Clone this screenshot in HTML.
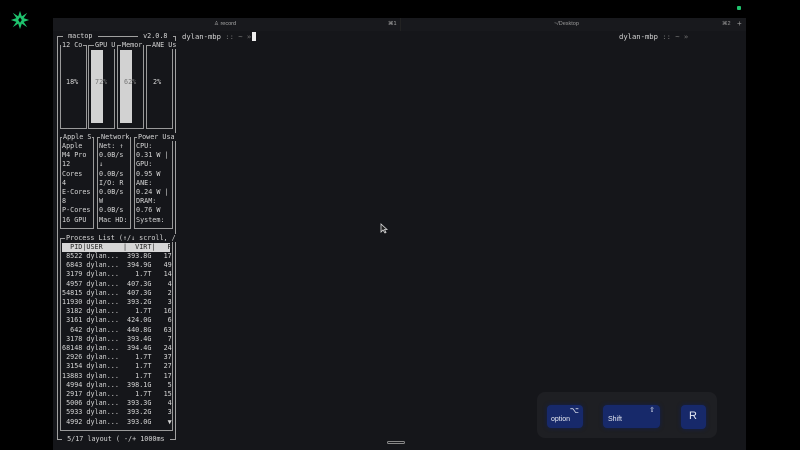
<!DOCTYPE html>
<html><head><meta charset="utf-8"><style>
*{margin:0;padding:0;box-sizing:border-box}
body{width:800px;height:450px;background:#000;position:relative;overflow:hidden;font-family:"DejaVu Sans Mono","Liberation Mono",monospace;color:#c9c9c9}
.a{position:absolute}
.t{position:absolute;font-size:6.75px;line-height:9.2px;white-space:pre;color:#d6d6d6}
.b{position:absolute;border:1px solid #9a9a9a}
.lbl{position:absolute;font-size:6.75px;line-height:8px;white-space:pre;background:#15161a;color:#d6d6d6;padding:0 1px}
.key{position:absolute;background:#17296a;border-radius:4px;color:#e6e9f2;font-family:"Liberation Sans",sans-serif;box-shadow:0 0 4px #12204f}
</style></head><body>
<svg class="a" style="left:10px;top:10px" width="20" height="20" viewBox="0 0 22 22"><polygon points="11,1 13,7 19,3 15,9 21,11 15,13 19,19 13,15 11,21 9,15 3,19 7,13 1,11 7,9 3,3 9,7" fill="#1fc46e"/><polygon points="11,8 13,11 11,14 9,11" fill="#000"/></svg>
<div class="a" style="left:737px;top:6px;width:4px;height:4px;background:#1fc46e;border-radius:1px"></div>
<div class="a" style="left:53px;top:18px;width:693px;height:432px;background:#15161a"></div>
<div class="a" style="left:53px;top:18px;width:693px;height:13px;background:#18191d"></div>
<div class="a" style="left:400px;top:18px;width:1px;height:13px;background:#222"></div>
<div class="t" style="left:214px;top:20px;font-family:'Liberation Sans',sans-serif;font-size:5.5px;line-height:8px;color:#aaa">♙ record</div>
<div class="t" style="left:388px;top:20px;font-family:'Liberation Sans',sans-serif;font-size:5.5px;line-height:8px;color:#aaa">⌘1</div>
<div class="t" style="left:554px;top:20px;font-family:'Liberation Sans',sans-serif;font-size:5.5px;line-height:8px;color:#999">~/Desktop</div>
<div class="t" style="left:722px;top:20px;font-family:'Liberation Sans',sans-serif;font-size:5.5px;line-height:8px;color:#999">⌘2</div>
<div class="t" style="left:737px;top:19px;font-family:'Liberation Sans',sans-serif;font-size:8px;line-height:10px;color:#999">+</div>
<div class="t" style="left:182px;top:32px;font-size:7.2px">dylan-mbp <span style="color:#777">:: ~ »</span></div>
<div class="a" style="left:252px;top:32px;width:4px;height:9px;background:#eee"></div>
<div class="t" style="left:619px;top:32px;font-size:7.2px">dylan-mbp <span style="color:#777">:: ~ »</span></div>
<div class="b" style="left:57px;top:36px;width:119px;height:404px;border-color:#a0a0a0"></div>
<div class="lbl" style="left:63px;top:32px"> mactop </div>
<div class="lbl" style="left:138px;top:32px"> v2.0.8 </div>
<div class="lbl" style="left:62px;top:435px"> 5/17 layout ( -/+ 1000ms </div>
<div class="b" style="left:60px;top:45px;width:27px;height:84px"></div>
<div class="b" style="left:88px;top:45px;width:27px;height:84px"></div>
<div class="b" style="left:117px;top:45px;width:27px;height:84px"></div>
<div class="b" style="left:146px;top:45px;width:27px;height:84px"></div>
<div class="a" style="left:91px;top:50px;width:12px;height:73px;background:#d2d2d2"></div>
<div class="a" style="left:120px;top:50px;width:12px;height:73px;background:#d2d2d2"></div>
<div class="lbl" style="left:61px;top:41px">12 Co</div>
<div class="lbl" style="left:94px;top:41px">GPU U</div>
<div class="lbl" style="left:121px;top:41px">Memor</div>
<div class="lbl" style="left:151px;top:41px">ANE Us</div>
<div class="t" style="left:66px;top:78px">18%</div>
<div class="t" style="left:95px;top:78px;color:#777">72%</div>
<div class="t" style="left:124px;top:78px;color:#777">62%</div>
<div class="t" style="left:153px;top:78px">2%</div>
<div class="b" style="left:60px;top:137px;width:34px;height:92px"></div>
<div class="b" style="left:97px;top:137px;width:34px;height:92px"></div>
<div class="b" style="left:134px;top:137px;width:39px;height:92px"></div>
<div class="lbl" style="left:62px;top:133px">Apple S</div>
<div class="lbl" style="left:100px;top:133px">Network</div>
<div class="lbl" style="left:137px;top:133px">Power Usa</div>
<div class="t" style="left:62px;top:142px">Apple
M4 Pro
12
Cores
4
E-Cores
8
P-Cores
16 GPU</div>
<div class="t" style="left:99px;top:142px">Net: ↑
0.0B/s
↓
0.0B/s
I/O: R
0.0B/s
W
0.0B/s
Mac HD:</div>
<div class="t" style="left:136px;top:142px">CPU:
0.31 W |
GPU:
0.95 W
ANE:
0.24 W |
DRAM:
0.76 W
System:</div>
<div class="b" style="left:60px;top:238px;width:113px;height:193px"></div>
<div class="lbl" style="left:65px;top:234px">Process List (↑/↓ scroll, /</div>
<div class="a" style="left:62px;top:243px;width:108px;height:9px;background:#d6d6d6"></div>
<div class="t" style="left:62px;top:243px;color:#222">  PID|USER     |  VIRT|   R</div>
<div class="t" style="left:62px;top:252px"> 8522 dylan...  393.8G   17
 6843 dylan...  394.9G   49
 3179 dylan...    1.7T   14
 4957 dylan...  407.3G    4
54815 dylan...  407.3G    2
11930 dylan...  393.2G    3
 3182 dylan...    1.7T   16
 3161 dylan...  424.0G    6
  642 dylan...  440.8G   63
 3178 dylan...  393.4G    7
68148 dylan...  394.4G   24
 2926 dylan...    1.7T   37
 3154 dylan...    1.7T   27
13883 dylan...    1.7T   17
 4994 dylan...  398.1G    5
 2917 dylan...    1.7T   15
 5006 dylan...  393.3G    4
 5933 dylan...  393.2G    3
 4992 dylan...  393.0G    ▼</div>
<svg class="a" style="left:380px;top:223px" width="8" height="11"><path d="M1 1 L1 9 L3 7 L5 10 L6 9.5 L4.5 6.5 L7 6.5 Z" fill="#222" stroke="#ddd" stroke-width="0.8"/></svg>
<div class="a" style="left:387px;top:441px;width:18px;height:3px;border:1px solid #888;border-radius:2px"></div>
<div class="a" style="left:537px;top:392px;width:180px;height:46px;background:#1e1f23;border-radius:8px"></div>
<div class="key" style="left:547px;top:405px;width:36px;height:23px"><span class="a" style="right:4px;top:1px;font-size:8px">⌥</span><span class="a" style="left:4px;top:11px;font-size:7px">option</span></div>
<div class="key" style="left:603px;top:405px;width:57px;height:23px"><span class="a" style="right:5px;top:1px;font-size:7px">⇧</span><span class="a" style="left:5px;top:11px;font-size:7px">Shift</span></div>
<div class="key" style="left:681px;top:405px;width:25px;height:24px"><span class="a" style="left:8px;top:5px;font-size:11px">R</span></div>
</body></html>
